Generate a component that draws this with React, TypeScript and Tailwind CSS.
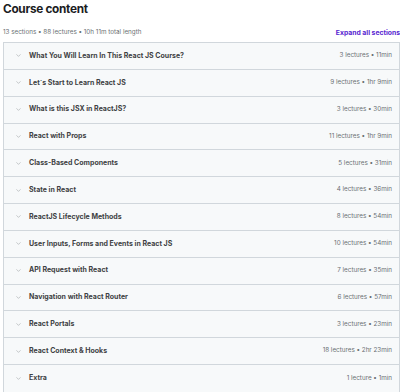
import { ChevronDown } from 'lucide-react';

const sections = [
  { title: 'What You Will Learn In This React JS Course?', meta: '3 lectures • 11min' },
  { title: 'Let`s Start to Learn React JS', meta: '9 lectures • 1hr 9min' },
  { title: 'What is this JSX in ReactJS?', meta: '3 lectures • 30min' },
  { title: 'React with Props', meta: '11 lectures • 1hr 9min' },
  { title: 'Class-Based Components', meta: '5 lectures • 31min' },
  { title: 'State in React', meta: '4 lectures • 36min' },
  { title: 'ReactJS Lifecycle Methods', meta: '8 lectures • 54min' },
  { title: 'User Inputs, Forms and Events in React JS', meta: '10 lectures • 54min' },
  { title: 'API Request with React', meta: '7 lectures • 35min' },
  { title: 'Navigation with React Router', meta: '6 lectures • 57min' },
  { title: 'React Portals', meta: '3 lectures • 23min' },
  { title: 'React Context & Hooks', meta: '18 lectures • 2hr 23min' },
  { title: 'Extra', meta: '1 lecture • 1min' },
];

export default function App() {
  return (
    <div className="w-[400px] h-[392px] bg-white overflow-hidden text-[#2d2f31]" style={{ fontFamily: 'Inter, "Liberation Sans", sans-serif' }}>
      <h2 className="pl-[3px] pt-[1px] h-[26px] text-[11.8px] font-bold leading-[16px] tracking-[-0.3px] text-[#1c1d1f]">Course content</h2>
      <div className="flex items-center justify-between pl-[3px] h-[14px]">
        <span className="text-[6.3px] text-[#6a6f73]">13 sections • 88 lectures • 10h 11m total length</span>
        <span className="text-[6.8px] font-bold text-[#5624d0] whitespace-nowrap">Expand all sections</span>
      </div>
      <div className="ml-[3px] mt-[2px] border border-[#d1d7dc]">
        {sections.map((s, i) => (
          <div
            key={i}
            className={`flex items-center h-[26.85px] bg-[#f7f9fa] pl-[11px] pr-[7px] ${i < sections.length - 1 ? 'border-b border-[#d1d7dc]' : ''}`}
          >
            <ChevronDown size={7} strokeWidth={1.25} className="text-[#6a6f73] shrink-0" />
            <span className="ml-[7px] text-[7px] font-bold flex-1 text-[#3e4143]">{s.title}</span>
            <span className="text-[6.3px] text-[#6a6f73]">{s.meta}</span>
          </div>
        ))}
      </div>
    </div>
  );
}
